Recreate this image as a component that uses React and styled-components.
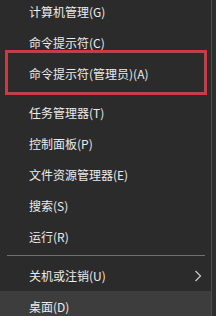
import React from 'react';
import styled, { createGlobalStyle } from 'styled-components';

const GlobalStyle = createGlobalStyle`
  html, body {
    margin: 0;
    padding: 0;
    background: #2b2b2b;
    overflow: hidden;
  }
`;

const Page = styled.div`
  display: flex;
  width: 216px;
  height: 316px;
  overflow: hidden;
  background: #2b2b2b;
`;

const Menu = styled.div`
  position: relative;
  width: 211px;
  flex-shrink: 0;
  margin-top: -4px;
  display: flex;
  flex-direction: column;
`;

const Edge = styled.div`
  flex: 1;
  border-left: 1px solid #4c4c4c;
  background: #2e2e2e;
`;

const Item = styled.div`
  position: relative;
  height: 31px;
  flex-shrink: 0;
  display: flex;
  align-items: center;
  justify-content: space-between;
  padding: 0 9px 0 29px;
  font-family: "Noto Sans CJK SC", "Noto Sans", sans-serif;
  font-size: 12px;
  color: #ececec;
  background: ${p => (p.$hover ? '#3d3d3d' : 'transparent')};
  white-space: nowrap;
`;

const Separator = styled.div`
  height: 1px;
  flex-shrink: 0;
  margin: 3px 6px 4px 7px;
  background: ${p => (p.$faint ? '#333333' : '#6f6f6f')};
`;

const Highlight = styled.div`
  position: absolute;
  left: 5px;
  right: 4px;
  top: -8px;
  bottom: -6px;
  border: 2px solid #d9343f;
  box-shadow: inset 0 0 0 1px rgba(235, 100, 112, 0.6);
  pointer-events: none;
`;

const Chevron = () => (
  <svg width="8" height="12" viewBox="0 0 8 12">
    <path d="M1.5 1 L6.5 6 L1.5 11" fill="none" stroke="#c4c4c4" strokeWidth="1.3" />
  </svg>
);

const groups = [
  [
    { label: '计算机管理(G)' },
    { label: '命令提示符(C)' },
    { label: '命令提示符(管理员)(A)', marked: true },
  ],
  [
    { label: '任务管理器(T)' },
    { label: '控制面板(P)' },
    { label: '文件资源管理器(E)' },
    { label: '搜索(S)' },
    { label: '运行(R)' },
  ],
  [
    { label: '关机或注销(U)', sub: true },
    { label: '桌面(D)', hover: true },
  ],
];

export default function App() {
  return (
    <>
      <GlobalStyle />
      <Page>
        <Menu>
          {groups.map((group, gi) => (
            <React.Fragment key={gi}>
              {gi > 0 && <Separator $faint={gi === 1} />}
              {group.map(item => (
                <Item key={item.label} $hover={item.hover}>
                  <span>{item.label}</span>
                  {item.sub && <Chevron />}
                  {item.marked && <Highlight />}
                </Item>
              ))}
            </React.Fragment>
          ))}
        </Menu>
        <Edge />
      </Page>
    </>
  );
}
